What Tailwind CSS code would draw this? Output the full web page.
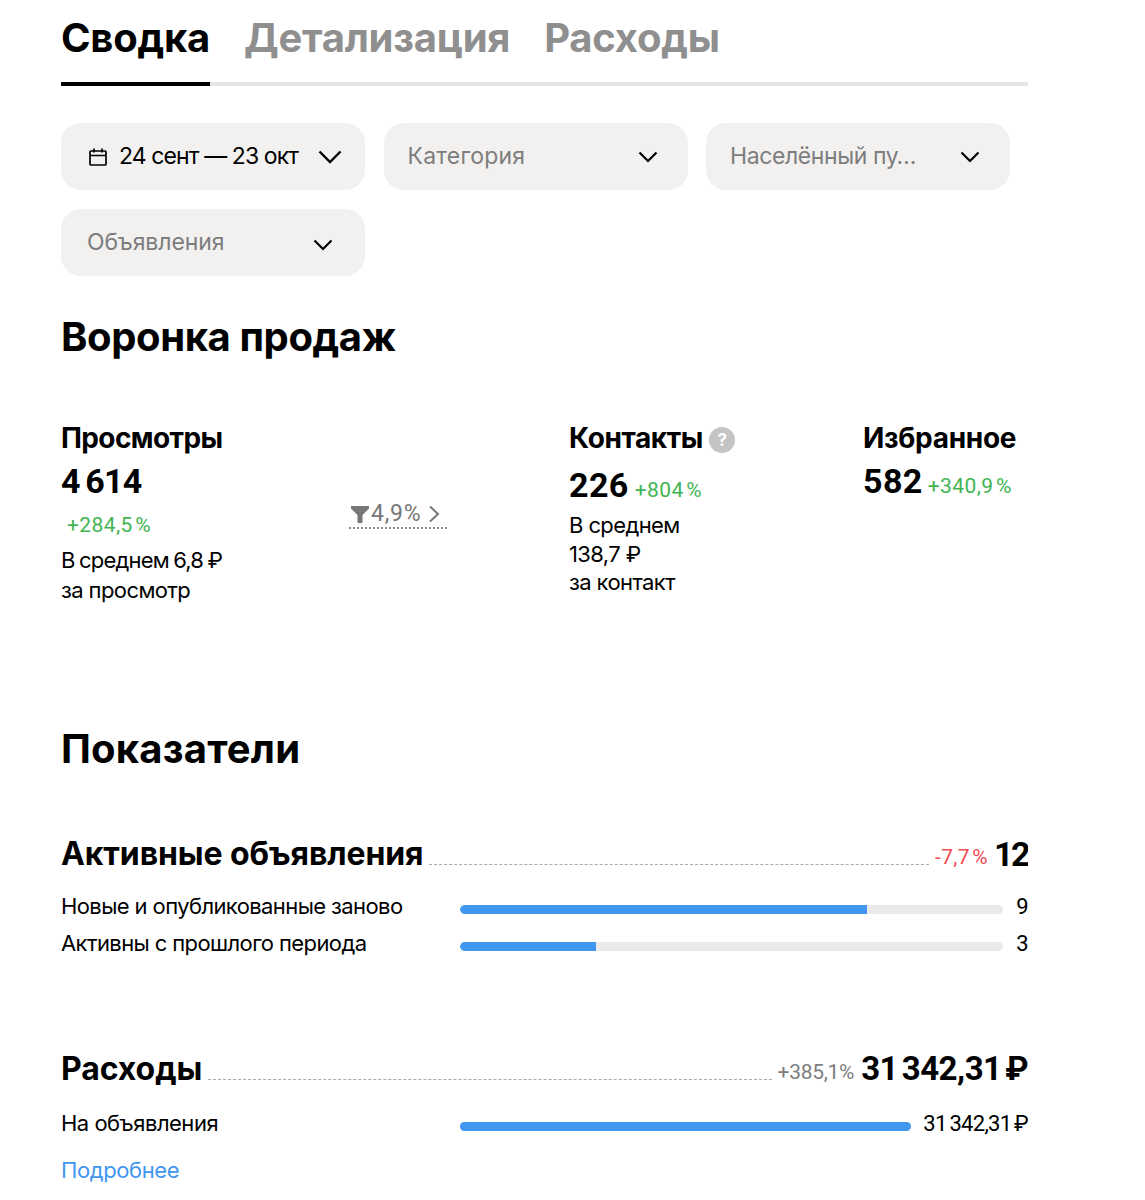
<!DOCTYPE html>
<html lang="ru">
<head>
  <meta charset="UTF-8">
  <title>Статистика</title>
  <script src="https://cdn.jsdelivr.net/npm/@tailwindcss/browser@4"></script>
</head>
<body class="bg-white text-black font-['Inter','Liberation_Sans',sans-serif]">
  <div class="w-[967px] ml-[61px] h-[1200px] overflow-hidden">
    <!-- tabs -->
    <div class="flex gap-[34px] h-[86px] border-b-[4px] border-[#e5e5e5] text-[40px] font-bold leading-[75px] tracking-[-0.25px]">
      <div class="h-[86px] w-[149px] border-b-[4px] border-black whitespace-nowrap">Сводка</div>
      <div class="text-[#8f8f8f]">Детализация</div>
      <div class="text-[#8f8f8f]">Расходы</div>
    </div>

    <!-- filters -->
    <div class="mt-[37px] flex flex-wrap gap-x-[18.5px] gap-y-[19px] text-[23px]">
      <div class="w-[304px] h-[67px] rounded-[20px] bg-[#f2f1f0] flex items-center pl-[28px] pr-[23px]">
        <svg width="18" height="18" viewBox="0 0 18 18" fill="none" stroke="black" stroke-width="1.7"><rect x="1" y="3" width="16" height="14" rx="1"/><path d="M1 7.5h16M5 0.5v4M13 0.5v4"/></svg>
        <span class="ml-[12px] whitespace-nowrap tracking-[-0.9px]">24 сент — 23 окт</span>
        <svg class="ml-auto" width="24" height="14" viewBox="0 0 24 14" fill="none" stroke="black" stroke-width="2.4"><path d="M1.5 1.5 12 12 22.5 1.5"/></svg>
      </div>
      <div class="w-[304px] h-[67px] rounded-[20px] bg-[#f2f1f0] flex items-center pl-[24px] pr-[30px] text-[#7d7d7d]">
        <span class="tracking-[0.2px]">Категория</span>
        <svg class="ml-auto" width="20" height="12" viewBox="0 0 20 12" fill="none" stroke="black" stroke-width="2.2"><path d="M1.5 1.5 10 10 18.5 1.5"/></svg>
      </div>
      <div class="w-[304px] h-[67px] rounded-[20px] bg-[#f2f1f0] flex items-center pl-[24px] pr-[30px] text-[#7d7d7d]">
        <span class="whitespace-nowrap tracking-[-0.4px]">Населённый пу…</span>
        <svg class="ml-auto" width="20" height="12" viewBox="0 0 20 12" fill="none" stroke="black" stroke-width="2.2"><path d="M1.5 1.5 10 10 18.5 1.5"/></svg>
      </div>
      <div class="w-[304px] h-[67px] rounded-[20px] bg-[#f2f1f0] flex items-center pl-[26px] pr-[32px] text-[#7d7d7d]">
        <span class="tracking-[-0.1px]">Объявления</span>
        <svg class="ml-auto mt-[4px]" width="20" height="12" viewBox="0 0 20 12" fill="none" stroke="black" stroke-width="2.2"><path d="M1.5 1.5 10 10 18.5 1.5"/></svg>
      </div>
    </div>

    <!-- funnel -->
    <h2 class="mt-[36px] text-[40px] leading-[50px] font-bold tracking-[-0.4px]">Воронка продаж</h2>
    <div class="mt-[59px] flex h-[303px] text-[22px] leading-[29.5px] tracking-[-0.6px]">
      <div class="w-[288px]">
        <div class="text-[28px] leading-[34px] font-bold tracking-[-0.6px]">Просмотры</div>
        <div class="mt-[6px] text-[34px] leading-[40px] font-bold font-['Roboto',sans-serif] tracking-[-0.8px] [word-spacing:-2px]">4 614</div>
        <div class="mt-[10px] ml-[6px] text-[21px] leading-[28px] text-[#43b453] font-['Roboto',sans-serif] tracking-[0.4px]">+284,5&#8202;%</div>
        <div class="mt-[7px] tracking-[-0.8px] [word-spacing:-1px]">В среднем 6,8 ₽</div>
        <div>за просмотр</div>
      </div>
      <div class="w-[220px] pt-[72px]">
        <div class="w-[98px] h-[36px] pt-[8px] border-b-2 border-dotted border-[#8a8a8a] flex items-center pl-[2px] text-[#777] text-[23px] font-['Roboto',sans-serif] tracking-[0.8px]">
          <svg width="18" height="17" viewBox="0 0 18 17" fill="#777"><path d="M0 0h18v2.5L11.5 9v8h-5V9L0 2.5z"/></svg>
          <span class="ml-[2px]">4,9%</span>
          <svg class="ml-[7px]" width="12" height="18" viewBox="0 0 12 18" fill="none" stroke="#777" stroke-width="2"><path d="M2 1.5 10 9 2 16.5"/></svg>
        </div>
      </div>
      <div class="w-[294px]">
        <div class="flex items-center text-[28px] leading-[34px] font-bold tracking-[-0.4px]">Контакты
          <span class="ml-[6px] mt-[3px] w-[26px] h-[26px] rounded-full bg-[#c4c4c4] text-white text-[17px] flex items-center justify-center">?</span>
        </div>
        <div class="mt-[10px] flex items-baseline leading-[40px]">
          <span class="text-[34px] font-bold font-['Roboto',sans-serif] tracking-[0.4px]">226</span>
          <span class="ml-[6px] text-[21px] text-[#43b453] font-['Roboto',sans-serif] tracking-[0.4px]">+804&#8202;%</span>
        </div>
        <div class="mt-[1px] leading-[28.5px]">В среднем<br>138,7 ₽<br>за контакт</div>
      </div>
      <div class="whitespace-nowrap">
        <div class="text-[28px] leading-[34px] font-bold tracking-[-0.3px]">Избранное</div>
        <div class="mt-[6px] flex items-baseline leading-[40px]">
          <span class="text-[34px] font-bold font-['Roboto',sans-serif] tracking-[0.4px]">582</span>
          <span class="ml-[5px] text-[21px] text-[#43b453] font-['Roboto',sans-serif] tracking-[0.4px]">+340,9&#8202;%</span>
        </div>
      </div>
    </div>

    <!-- metrics -->
    <h2 class="text-[40px] leading-[50px] font-bold tracking-[0.2px]">Показатели</h2>
    <div class="mt-[59px]">
      <div class="flex items-end h-[42px]">
        <span class="text-[32px] leading-[42px] font-bold tracking-[-0.1px] whitespace-nowrap">Активные объявления</span>
        <span class="flex-1 mx-[6px] mb-[10px] border-b border-dashed border-[#aaa]"></span>
        <span class="text-[21px] leading-[34px] text-[#f04a55] font-['Roboto',sans-serif] tracking-[0.3px] mb-[1px]">-7,7&#8202;%</span>
        <span class="ml-[6px] text-[34px] leading-[42px] font-bold font-['Roboto',sans-serif] tracking-[-2.5px]">12</span>
      </div>
      <div class="mt-[19px] flex items-center h-[24px] text-[22px] tracking-[-0.6px]">
        <span class="w-[399px] whitespace-nowrap">Новые и опубликованные заново</span>
        <div class="w-[543px] h-[9px] mt-[6px] rounded-full bg-[#ebeae8] overflow-hidden"><div class="h-full rounded-l-full bg-[#4196f0]" style="width:75%"></div></div>
        <span class="ml-auto font-['Roboto',sans-serif]">9</span>
      </div>
      <div class="mt-[13px] flex items-center h-[24px] text-[22px] tracking-[-0.6px]">
        <span class="w-[399px] whitespace-nowrap">Активны с прошлого периода</span>
        <div class="w-[543px] h-[9px] mt-[6px] rounded-full bg-[#ebeae8] overflow-hidden"><div class="h-full rounded-l-full bg-[#4196f0]" style="width:25%"></div></div>
        <span class="ml-auto font-['Roboto',sans-serif]">3</span>
      </div>
    </div>
    <div class="mt-[93px]">
      <div class="flex items-end h-[42px]">
        <span class="text-[32px] leading-[42px] font-bold tracking-[-0.1px] whitespace-nowrap">Расходы</span>
        <span class="flex-1 mx-[6px] mb-[10px] border-b border-dashed border-[#aaa]"></span>
        <span class="text-[21px] leading-[34px] text-[#7d7d7d] font-['Roboto',sans-serif] tracking-[-0.3px] mb-[1px]">+385,1%</span>
        <span class="ml-[7px] text-[33px] leading-[42px] font-bold font-['Roboto',sans-serif] tracking-[-0.5px] [word-spacing:-4px] whitespace-nowrap">31 342,31 ₽</span>
      </div>
      <div class="mt-[21px] flex items-center h-[24px] text-[22px] tracking-[-0.5px]">
        <span class="w-[399px]">На объявления</span>
        <div class="w-[451px] h-[9px] mt-[6px] rounded-full bg-[#4196f0]"></div>
        <span class="ml-auto font-['Roboto',sans-serif] tracking-[-0.7px] [word-spacing:-2px] whitespace-nowrap">31 342,31 ₽</span>
      </div>
      <div class="mt-[23px] text-[22px] leading-[24px] text-[#4196f0] tracking-[-0.4px]">Подробнее</div>
    </div>
  </div>
</body>
</html>
